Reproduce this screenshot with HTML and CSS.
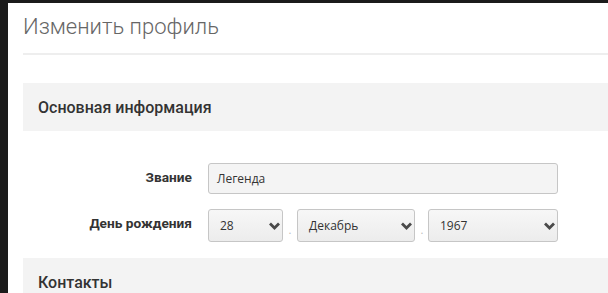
FILE: index.html
```html
<!DOCTYPE html>
<html lang="ru">
<head>
<meta charset="utf-8">
<link rel="stylesheet" href="styles.css">
</head>
<body>
<div class="panel">
  <h1 class="title">Изменить профиль</h1>
  <section class="section">
    <h2 class="section-head">Основная информация</h2>
    <div class="form">
      <div class="row">
        <label class="label">Звание</label>
        <div class="input">Легенда</div>
      </div>
      <div class="row row-date">
        <label class="label">День рождения</label>
        <div class="selects">
          <div class="select sel-day"><span>28</span><svg class="chev" width="11" height="8" viewBox="0 0 11 8"><path d="M1 1.5 L5.5 6 L10 1.5" fill="none" stroke="#4a4a4a" stroke-width="2.8"/></svg></div>
          <span class="dot">.</span>
          <div class="select sel-month"><span>Декабрь</span><svg class="chev" width="11" height="8" viewBox="0 0 11 8"><path d="M1 1.5 L5.5 6 L10 1.5" fill="none" stroke="#4a4a4a" stroke-width="2.8"/></svg></div>
          <span class="dot">.</span>
          <div class="select sel-year"><span>1967</span><svg class="chev" width="11" height="8" viewBox="0 0 11 8"><path d="M1 1.5 L5.5 6 L10 1.5" fill="none" stroke="#4a4a4a" stroke-width="2.8"/></svg></div>
        </div>
      </div>
    </div>
  </section>
  <section class="section">
    <h2 class="section-head">Контакты</h2>
  </section>
</div>
</body>
</html>
```

FILE: styles.css
```css
html, body {
  margin: 0;
  padding: 0;
  background: #1b1b1b;
  overflow: hidden;
}
.panel {
  margin: 3px 0 0 8px;
  background: #fff;
  padding-left: 15px;
  height: 290px;
  font-family: Roboto, "Liberation Sans", sans-serif;
}
.title {
  margin: 0;
  height: 52px;
  box-sizing: border-box;
  padding-top: 10px;
  font-size: 22px;
  font-weight: 300;
  color: #666;
  line-height: 28px;
  border-bottom: 2px solid #eee;
}
.section {
  margin-top: 28px;
}
.section + .section {
  margin-top: 16px;
}
.section-head {
  margin: 0;
  height: 48px;
  background: #f3f3f3;
  padding-left: 15px;
  display: flex;
  align-items: center;
  font-size: 16px;
  font-weight: 500;
  color: #333;
}
.form {
  padding-top: 32px;
  display: flex;
  flex-direction: column;
  gap: 15px;
}
.row {
  display: flex;
  align-items: center;
  gap: 16px;
}
.label {
  width: 169px;
  text-align: right;
  font-size: 13.7px;
  font-weight: 700;
  color: #333;
}
.row-date .label {
  margin-top: -6px;
}
.row:first-child .label {
  margin-top: -3px;
}
.input {
  width: 350px;
  height: 31px;
  box-sizing: border-box;
  border: 1px solid #c6c6c6;
  border-radius: 3px;
  background: #f4f4f4;
  padding-left: 8px;
  display: flex;
  align-items: center;
  font-family: "Open Sans", sans-serif;
  font-size: 12px;
  color: #333;
}
.selects {
  display: flex;
  align-items: center;
}
.select {
  height: 33px;
  box-sizing: border-box;
  border: 1px solid #c6c6c6;
  border-radius: 3px;
  background: linear-gradient(#f7f7f7, #ececec);
  padding: 0 2px 0 11px;
  display: flex;
  align-items: center;
  justify-content: space-between;
  font-family: "Open Sans", sans-serif;
  font-size: 12px;
  color: #333;
}
.sel-day { width: 75px; }
.sel-month { width: 118px; }
.sel-year { width: 130px; }
.chev {
  margin-top: 1px;
}
.dot {
  width: 14px;
  text-align: center;
  font-family: "Open Sans", sans-serif;
  font-size: 11px;
  color: #bbb;
  margin-top: 8px;
}
.dot + .sel-year { margin-left: -1px; }
```
